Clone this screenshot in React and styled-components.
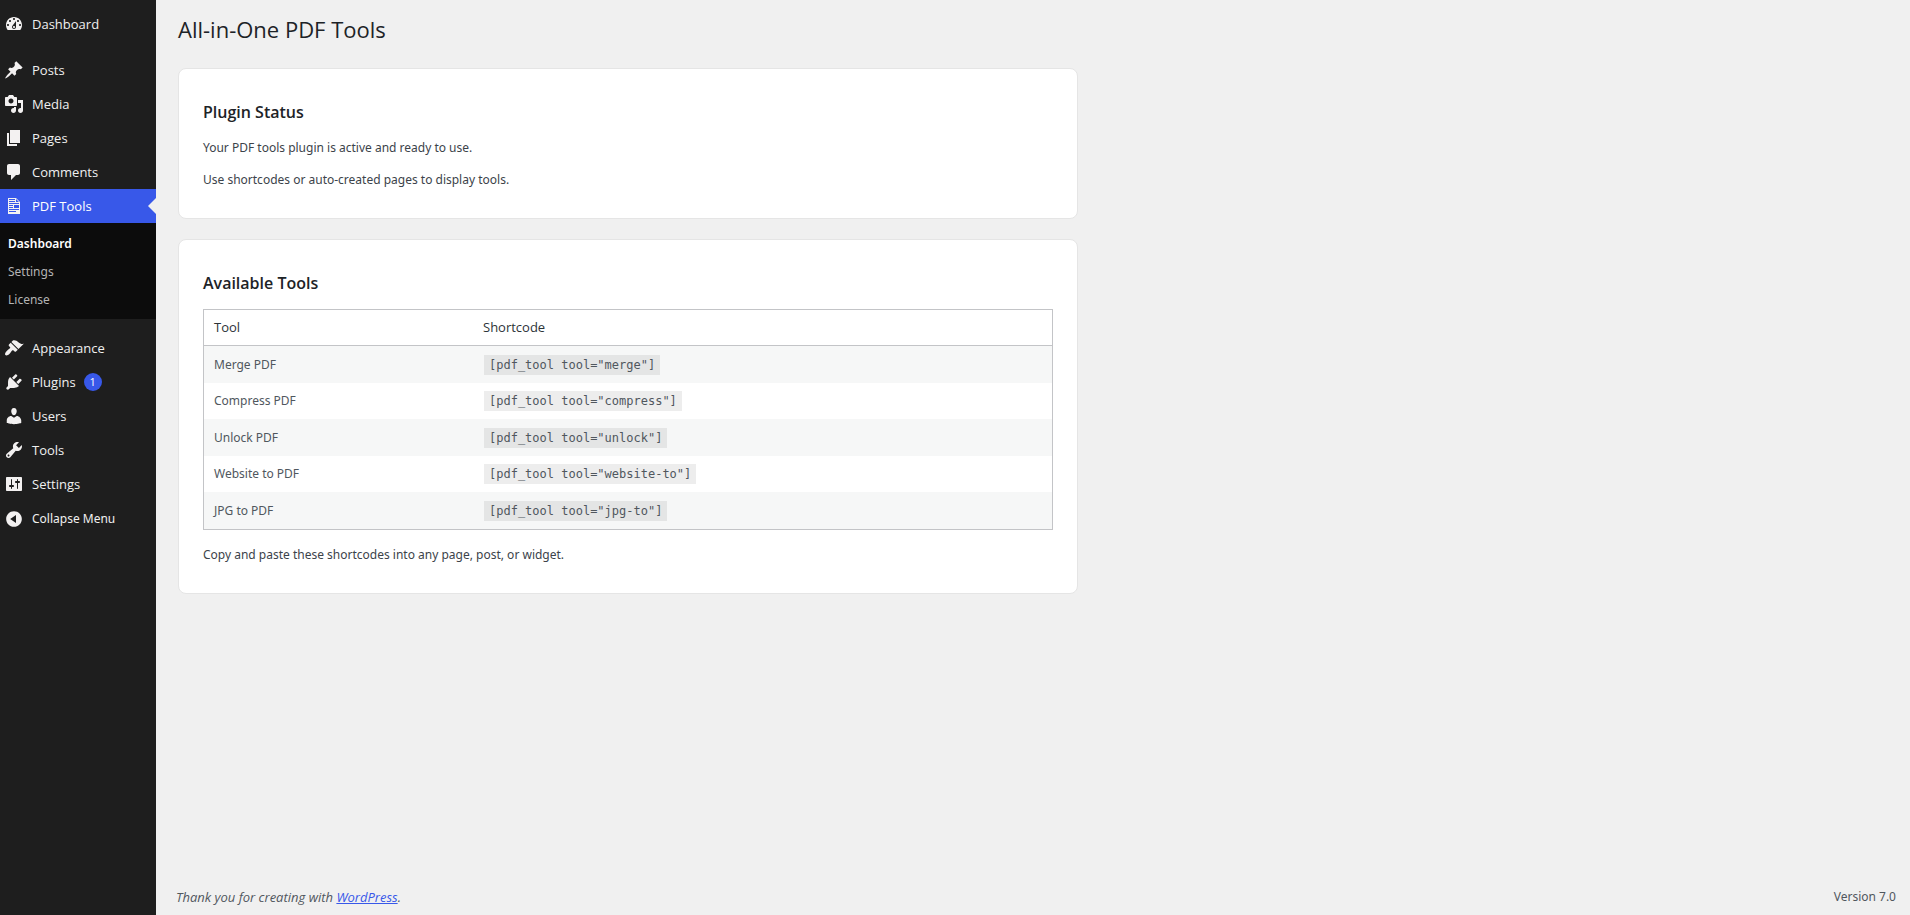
import React from "react";
import styled, { createGlobalStyle, css } from "styled-components";

const headingFont = `"Open Sans", "Noto Sans", sans-serif`;

const GlobalStyle = createGlobalStyle`
  * {
    box-sizing: border-box;
  }

  body {
    margin: 0;
    background: #f0f0f0;
    color: #3c434a;
    font-family: "Noto Sans", "Open Sans", sans-serif;
    font-size: 12px;
    line-height: 20px;
  }
`;

const Layout = styled.div`
  display: flex;
  min-height: 100vh;
`;

const Sidebar = styled.nav`
  flex: 0 0 156px;
  padding-top: 7px;
  background: #1e1e1e;
`;

const Menu = styled.ul`
  margin: 0;
  padding: 0;
  list-style: none;
`;

const MenuItem = styled.li`
  margin-top: ${(props) => (props.$spaced ? "12px" : "0")};
`;

const menuRow = css`
  display: flex;
  align-items: center;
  width: 100%;
  height: 34px;
  padding: 0 0 0 4px;
  gap: 8px;
  border: 0;
  background: transparent;
  color: #f0f0f0;
  font-family: ${headingFont};
  font-size: 13px;
  line-height: 18px;
  text-align: left;
  text-decoration: none;
  cursor: pointer;
`;

const MenuLink = styled.a`
  ${menuRow}
  ${(props) =>
    props.$active &&
    css`
      position: relative;
      background: #3858e9;
      color: #fff;

      &::after {
        content: "";
        position: absolute;
        top: 50%;
        right: 0;
        margin-top: -8px;
        border: 8px solid transparent;
        border-left-width: 0;
        border-right-color: #f0f0f0;
      }
    `}
`;

const CollapseButton = styled.button`
  ${menuRow}
  height: 36px;
  font-family: inherit;
  font-size: 12px;
`;

const Icon = styled.svg`
  flex: none;
  width: 20px;
  height: 20px;
  fill: #f3f1f1;
`;

const Badge = styled.span`
  min-width: 18px;
  height: 18px;
  border-radius: 9px;
  background: #3858e9;
  color: #fff;
  font-size: 11px;
  text-align: center;
`;

const Submenu = styled.ul`
  margin: 0;
  padding: 7px 0 5px;
  background: #0c0c0c;
  list-style: none;
`;

const SubmenuLink = styled.a`
  display: block;
  padding: 4px 8px;
  color: ${(props) => (props.$current ? "#fff" : "#b4b4b4")};
  font-weight: ${(props) => (props.$current ? 600 : 400)};
  text-decoration: none;
`;

const Content = styled.div`
  display: flex;
  flex: 1;
  flex-direction: column;
  min-width: 0;
`;

const Main = styled.main`
  flex: 1;
  padding: 14px 22px 0;
`;

const PageTitle = styled.h1`
  margin: 0 0 24px;
  color: #1d2327;
  font-family: ${headingFont};
  font-size: 22px;
  font-weight: 400;
  line-height: 30px;
`;

const Card = styled.section`
  max-width: 900px;
  margin-bottom: 20px;
  padding: 32px 24px 28px;
  border: 1px solid #e5e5e5;
  border-radius: 8px;
  background: #fff;
`;

const CardTitle = styled.h2`
  margin: 0 0 15px;
  color: #1d2327;
  font-family: ${headingFont};
  font-size: 16px;
  font-weight: 600;
  line-height: 22px;
`;

const Text = styled.p`
  margin: 0;

  & + & {
    margin-top: 12px;
  }
`;

const ToolTable = styled.table`
  width: 100%;
  margin-bottom: 15px;
  border: 1px solid #c3c4c7;
  border-spacing: 0;
  table-layout: fixed;
`;

const HeadCell = styled.th`
  width: ${(props) => props.$width || "auto"};
  padding: 8px 10px;
  border-bottom: 1px solid #c3c4c7;
  color: #2c3338;
  font-family: ${headingFont};
  font-size: 13px;
  font-weight: 400;
  line-height: 19px;
  text-align: left;
`;

const Row = styled.tr`
  height: 36px;

  &:nth-child(odd) {
    height: 37px;
    background: #f6f7f7;
  }
`;

const Cell = styled.td`
  padding: 6px 10px;
  color: #50575e;
`;

const Code = styled.code`
  margin: 0 1px;
  padding: 3px 5px;
  background: rgba(0, 0, 0, 0.07);
  font-family: "DejaVu Sans Mono", monospace;
  font-size: 12px;
`;

const Footer = styled.footer`
  display: flex;
  justify-content: space-between;
  padding: 10px 14px 8px 20px;
  color: #50575e;
`;

const Thanks = styled.em`
  font-family: ${headingFont};
  font-size: 13px;
`;

const FooterLink = styled.a`
  color: #3858e9;
`;

const icons = {
  dashboard:
    "M3.76 16h12.48c1.1-1.37 1.76-3.11 1.76-5 0-4.42-3.58-8-8-8s-8 3.58-8 8c0 1.89.66 3.63 1.76 5zM10 4c.55 0 1 .45 1 1s-.45 1-1 1-1-.45-1-1 .45-1 1-1zM6 6c.55 0 1 .45 1 1s-.45 1-1 1-1-.45-1-1 .45-1 1-1zm8 0c.55 0 1 .45 1 1s-.45 1-1 1-1-.45-1-1 .45-1 1-1zm-5.37 5.55L12 7v6c0 1.1-.9 2-2 2s-2-.9-2-2c0-.57.24-1.08.63-1.45zM4 10c.55 0 1 .45 1 1s-.45 1-1 1-1-.45-1-1 .45-1 1-1zm12 0c.55 0 1 .45 1 1s-.45 1-1 1-1-.45-1-1 .45-1 1-1zm-5 3c0-.55-.45-1-1-1s-1 .45-1 1 .45 1 1 1 1-.45 1-1z",
  post: "M10.44 3.02l1.82-1.82 6.36 6.35-1.83 1.82c-1.05-.68-2.48-.57-3.41.36l-.75.75c-.92.93-1.04 2.35-.35 3.41l-1.83 1.82-2.41-2.41-2.8 2.79c-.42.42-3.38 2.71-3.8 2.29s1.86-3.39 2.28-3.81l2.79-2.79L4.1 9.36l1.83-1.82c1.05.69 2.48.57 3.4-.36l.75-.75c.93-.92 1.05-2.35.36-3.41z",
  media:
    "M13 11V4c0-.55-.45-1-1-1h-1.67L9 1H5L3.67 3H2c-.55 0-1 .45-1 1v7c0 .55.45 1 1 1h10c.55 0 1-.45 1-1zM7 4.5c1.38 0 2.5 1.12 2.5 2.5S8.38 9.5 7 9.5 4.5 8.38 4.5 7 5.62 4.5 7 4.5zM14 6h5v10.5c0 1.38-1.12 2.5-2.5 2.5S14 17.88 14 16.5s1.12-2.5 2.5-2.5c.17 0 .34.02.5.05V9h-3V6zm-4 8.05V13h2v3.5c0 1.38-1.12 2.5-2.5 2.5S7 17.88 7 16.5 8.12 14 9.5 14c.17 0 .34.02.5.05z",
  page: "M6 15V2h10v13H6zm-1 1h8v2H3V5h2v11z",
  comments:
    "M5 2h9c1.1 0 2 .9 2 2v7c0 1.1-.9 2-2 2h-2l-5 5v-5H5c-1.1 0-2-.9-2-2V4c0-1.1.9-2 2-2z",
  document:
    "M12 2l4 4v12H4V2h8zM5 3v1h6V3H5zm7 3h3l-3-3v3zM5 5v1h6V5H5zm10 3V7H5v1h10zM5 9v1h4V9H5zm10 3V9h-5v3h5zM5 11v1h4v-1H5zm10 3v-1H5v1h10zm-3 2v-1H5v1h7z",
  appearance:
    "M14.48 11.06L7.41 3.99l1.5-1.5c.5-.56 2.3-.47 3.51.32 1.21.8 1.43 1.28 2.91 2.1 1.18.64 2.45 1.26 4.45.85zm-.71.71L6.7 4.7 4.93 6.47c-.39.39-.39 1.02 0 1.41l1.06 1.06c.39.39.39 1.03 0 1.42-.6.6-1.43 1.11-2.21 1.69-.35.26-.7.53-1.01.84C1.43 14.23.4 16.08 1.4 17.07c.99 1 2.84-.03 4.18-1.36.31-.31.58-.66.85-1.02.57-.78 1.08-1.61 1.69-2.21.39-.39 1.02-.39 1.41 0l1.06 1.06c.39.39 1.02.39 1.41 0z",
  plugins:
    "M13.11 4.36L9.87 7.6 8 5.73l3.24-3.24c.35-.34 1.05-.2 1.56.32.52.51.66 1.21.31 1.55zm-8 1.77l.91-1.12 9.01 9.01-1.19.84c-.71.71-2.63 1.16-3.82 1.16H6.14L4.9 17.26c-.59.59-1.54.59-2.12 0-.59-.58-.59-1.53 0-2.12l1.24-1.24v-3.88c0-1.13.4-3.19 1.09-3.89zm7.26 3.97l3.24-3.24c.34-.35 1.04-.21 1.55.31.52.51.66 1.21.31 1.55l-3.24 3.25z",
  users:
    "M10 9.25c-2.27 0-2.73-3.44-2.73-3.44C7 4.02 7.82 2 9.97 2c2.16 0 2.98 2.02 2.71 3.81 0 0-.41 3.44-2.68 3.44zm0 2.57L12.72 10c2.39 0 4.52 2.33 4.52 4.53v2.49s-3.65 1.13-7.24 1.13c-3.65 0-7.24-1.13-7.24-1.13v-2.49c0-2.25 1.94-4.48 4.47-4.48z",
  tools:
    "M16.68 9.77c-1.34 1.34-3.3 1.67-4.95.99l-5.41 6.52c-.99.99-2.59.99-3.58 0s-.99-2.59 0-3.57l6.52-5.42c-.68-1.65-.35-3.61.99-4.95 1.28-1.28 3.12-1.62 4.72-1.06l-2.89 2.89 2.82 2.82 2.86-2.87c.53 1.58.18 3.39-1.08 4.65zM3.81 16.21c.4.39 1.04.39 1.43 0 .4-.4.4-1.04 0-1.43-.39-.4-1.03-.4-1.43 0-.39.39-.39 1.03 0 1.43z",
  settings:
    "M18 16V4c0-.55-.45-1-1-1H3c-.55 0-1 .45-1 1v12c0 .55.45 1 1 1h14c.55 0 1-.45 1-1zM8 11h1c.55 0 1 .45 1 1s-.45 1-1 1H8v1.5c0 .28-.22.5-.5.5s-.5-.22-.5-.5V13H6c-.55 0-1-.45-1-1s.45-1 1-1h1V5.5c0-.28.22-.5.5-.5s.5.22.5.5V11zm5-2h-1c-.55 0-1-.45-1-1s.45-1 1-1h1V5.5c0-.28.22-.5.5-.5s.5.22.5.5V7h1c.55 0 1 .45 1 1s-.45 1-1 1h-1v5.5c0 .28-.22.5-.5.5s-.5-.22-.5-.5V9z",
  collapse:
    "M10 2.16c4.33 0 7.84 3.51 7.84 7.84s-3.51 7.84-7.84 7.84S2.16 14.33 2.16 10 5.67 2.16 10 2.16zm2 11.72V6.12L6.18 9.97z",
};

const menu = [
  { label: "Dashboard", icon: "dashboard" },
  { label: "Posts", icon: "post", spaced: true },
  { label: "Media", icon: "media" },
  { label: "Pages", icon: "page" },
  { label: "Comments", icon: "comments" },
  {
    label: "PDF Tools",
    icon: "document",
    active: true,
    submenu: ["Dashboard", "Settings", "License"],
  },
  { label: "Appearance", icon: "appearance", spaced: true },
  { label: "Plugins", icon: "plugins", count: 1 },
  { label: "Users", icon: "users" },
  { label: "Tools", icon: "tools" },
  { label: "Settings", icon: "settings" },
];

const tools = [
  { name: "Merge PDF", slug: "merge" },
  { name: "Compress PDF", slug: "compress" },
  { name: "Unlock PDF", slug: "unlock" },
  { name: "Website to PDF", slug: "website-to" },
  { name: "JPG to PDF", slug: "jpg-to" },
];

const MenuIcon = ({ name }) => (
  <Icon viewBox="0 0 20 20" aria-hidden="true">
    <path fillRule="evenodd" d={icons[name]} />
  </Icon>
);

const AdminMenu = () => (
  <Sidebar aria-label="Main menu">
    <Menu>
      {menu.map((item) => (
        <MenuItem key={item.label} $spaced={item.spaced}>
          <MenuLink href="#" $active={item.active}>
            <MenuIcon name={item.icon} />
            <span>{item.label}</span>
            {item.count && <Badge>{item.count}</Badge>}
          </MenuLink>
          {item.submenu && (
            <Submenu>
              {item.submenu.map((label, i) => (
                <li key={label}>
                  <SubmenuLink href="#" $current={i === 0}>
                    {label}
                  </SubmenuLink>
                </li>
              ))}
            </Submenu>
          )}
        </MenuItem>
      ))}
      <MenuItem>
        <CollapseButton type="button">
          <MenuIcon name="collapse" />
          <span>Collapse Menu</span>
        </CollapseButton>
      </MenuItem>
    </Menu>
  </Sidebar>
);

const App = () => {
  return (
    <Layout>
      <GlobalStyle />
      <AdminMenu />
      <Content>
        <Main>
          <PageTitle>All-in-One PDF Tools</PageTitle>
          <Card>
            <CardTitle>Plugin Status</CardTitle>
            <Text>Your PDF tools plugin is active and ready to use.</Text>
            <Text>Use shortcodes or auto-created pages to display tools.</Text>
          </Card>
          <Card>
            <CardTitle>Available Tools</CardTitle>
            <ToolTable>
              <thead>
                <tr>
                  <HeadCell scope="col" $width="269px">
                    Tool
                  </HeadCell>
                  <HeadCell scope="col">Shortcode</HeadCell>
                </tr>
              </thead>
              <tbody>
                {tools.map((tool) => (
                  <Row key={tool.slug}>
                    <Cell>{tool.name}</Cell>
                    <Cell>
                      <Code>{`[pdf_tool tool="${tool.slug}"]`}</Code>
                    </Cell>
                  </Row>
                ))}
              </tbody>
            </ToolTable>
            <Text>
              Copy and paste these shortcodes into any page, post, or widget.
            </Text>
          </Card>
        </Main>
        <Footer>
          <Thanks>
            Thank you for creating with{" "}
            <FooterLink href="#">WordPress</FooterLink>.
          </Thanks>
          <span>Version 7.0</span>
        </Footer>
      </Content>
    </Layout>
  );
};

export default App;
